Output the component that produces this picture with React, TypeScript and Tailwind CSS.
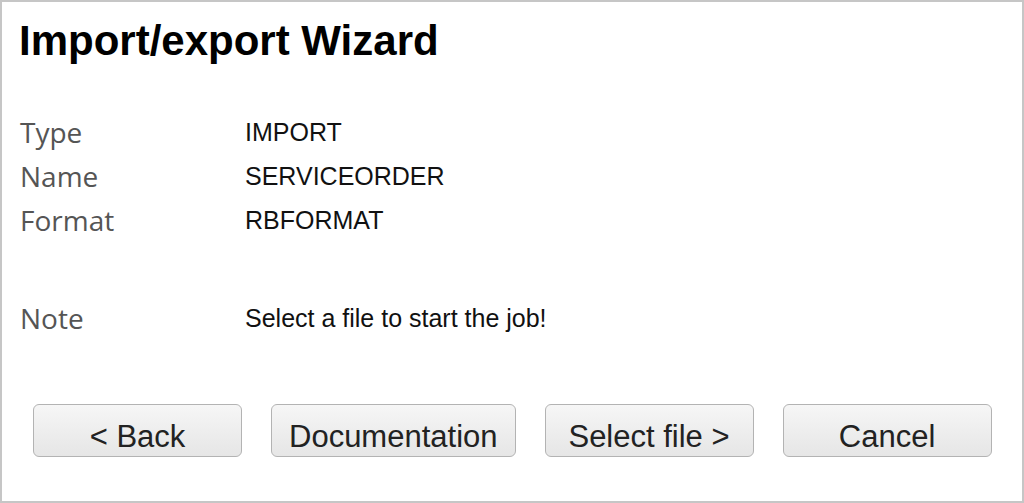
const rows = [
  { label: "Type", value: "IMPORT" },
  { label: "Name", value: "SERVICEORDER" },
  { label: "Format", value: "RBFORMAT" },
];

const buttons = ["< Back", "Documentation", "Select file >", "Cancel"];

const Row = ({ label, value, className = "" }: { label: string; value: string; className?: string }) => (
  <div className={`flex ${className}`}>
    <div className="w-[225px] text-[28px] leading-[44px] text-[#555] [font-family:'Open_Sans',sans-serif]">
      {label}
    </div>
    <div className="text-[25px] leading-[44px] text-[#111]">{value}</div>
  </div>
);

export default function App() {
  return (
    <div className="h-[503px] w-[1024px] border-2 border-[#c6c6c6] bg-white pl-[18px] pt-[18px] [font-family:'Liberation_Sans',Arial,sans-serif]">
      <h1 className="-ml-[1px] text-[42px] font-bold leading-none text-black">Import/export Wizard</h1>

      <div className="mt-[48px]">
        {rows.map((r) => (
          <Row key={r.label} label={r.label} value={r.value} />
        ))}
        <Row label="Note" value="Select a file to start the job!" className="mt-[54px]" />
      </div>

      <div className="mt-[64px] flex gap-[29px] pl-[13px]">
        {buttons.map((b) => (
          <button
            key={b}
            className="h-[53px] min-w-[209px] rounded-[6px] border border-[#b3b3b3] bg-gradient-to-b from-[#f6f6f6] to-[#e6e6e6] px-[17px] pb-[5px] pt-[16px] text-center text-[31px] leading-none text-[#222]"
          >
            {b}
          </button>
        ))}
      </div>
    </div>
  );
}
